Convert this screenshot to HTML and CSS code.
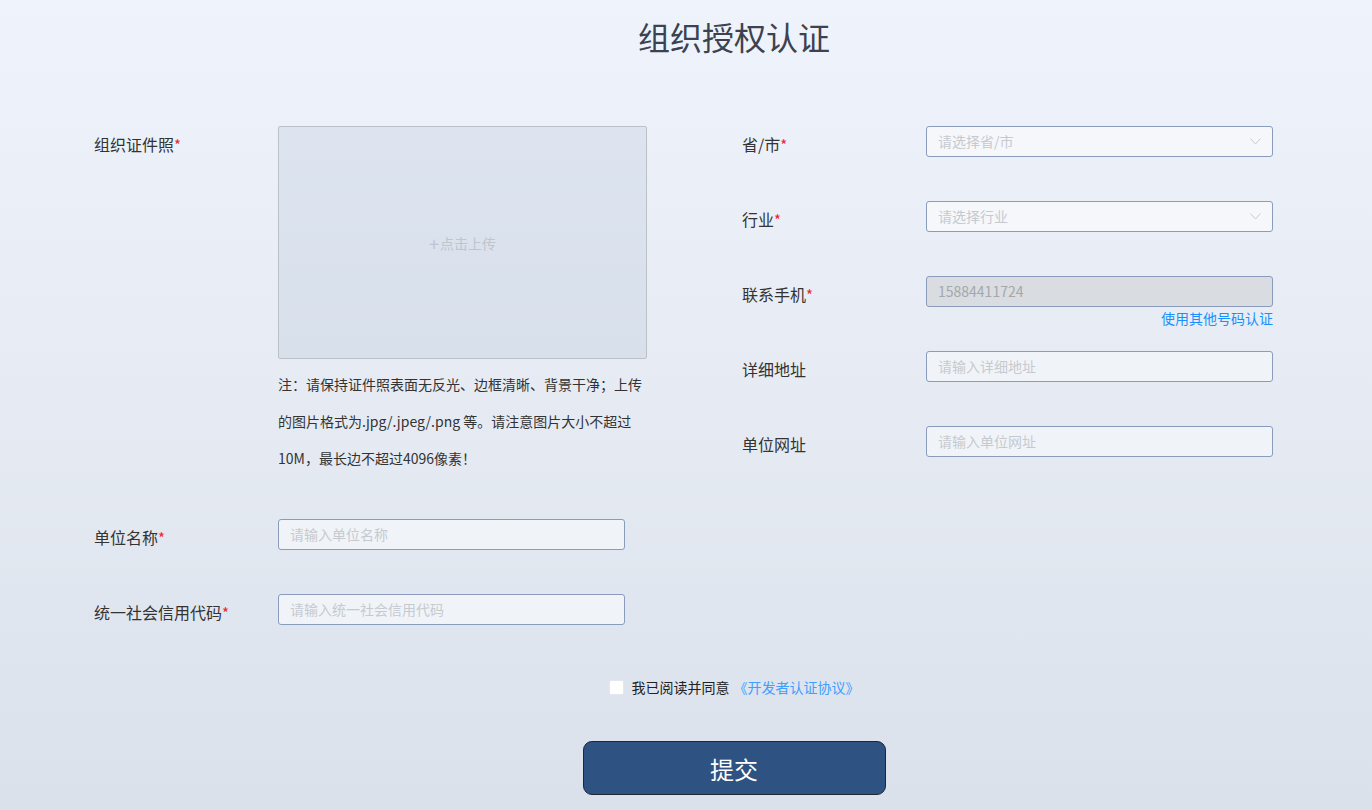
FILE: index.html
```html
<!DOCTYPE html>
<html lang="zh-CN">
<head>
<meta charset="utf-8">
<title>组织授权认证</title>
<link rel="stylesheet" href="styles.css">
</head>
<body>
<div class="page">
  <h1 class="title">组织授权认证</h1>

  <div class="form">
    <div class="col">
      <div class="row row-upload">
        <div class="label">组织证件照<span class="req">*</span></div>
        <div class="field">
          <div class="upload"><span class="plus">+</span>点击上传</div>
          <p class="note">注：请保持证件照表面无反光、边框清晰、背景干净；上传<br>的图片格式为.jpg/.jpeg/.png 等。请注意图片大小不超过<br>10M，最长边不超过4096像素！</p>
        </div>
      </div>
      <div class="row">
        <div class="label">单位名称<span class="req">*</span></div>
        <div class="field"><input class="input" type="text" placeholder="请输入单位名称"></div>
      </div>
      <div class="row">
        <div class="label">统一社会信用代码<span class="req">*</span></div>
        <div class="field"><input class="input" type="text" placeholder="请输入统一社会信用代码"></div>
      </div>
    </div>

    <div class="col">
      <div class="row">
        <div class="label">省/市<span class="req">*</span></div>
        <div class="field">
          <div class="select"><span class="ph">请选择省/市</span>
            <svg class="chev" width="11" height="7" viewBox="0 0 11 7"><polyline points="0.5,0.5 5.5,6 10.5,0.5" fill="none" stroke="#c6cad0" stroke-width="1"/></svg>
          </div>
        </div>
      </div>
      <div class="row">
        <div class="label">行业<span class="req">*</span></div>
        <div class="field">
          <div class="select"><span class="ph">请选择行业</span>
            <svg class="chev" width="11" height="7" viewBox="0 0 11 7"><polyline points="0.5,0.5 5.5,6 10.5,0.5" fill="none" stroke="#c6cad0" stroke-width="1"/></svg>
          </div>
        </div>
      </div>
      <div class="row">
        <div class="label">联系手机<span class="req">*</span></div>
        <div class="field">
          <input class="input disabled" type="text" value="15884411724" disabled>
          <a class="other" href="#">使用其他号码认证</a>
        </div>
      </div>
      <div class="row">
        <div class="label">详细地址</div>
        <div class="field"><input class="input" type="text" placeholder="请输入详细地址"></div>
      </div>
      <div class="row">
        <div class="label">单位网址</div>
        <div class="field"><input class="input" type="text" placeholder="请输入单位网址"></div>
      </div>
    </div>
  </div>

  <div class="center">
    <label class="agree"><span class="box"></span><span class="agree-text">我已阅读并同意</span><a class="protocol" href="#">《开发者认证协议》</a></label>
    <button class="submit" type="button">提交</button>
  </div>
</div>
</body>
</html>
```

FILE: styles.css
```css
* { box-sizing: border-box; }
html, body { margin: 0; padding: 0; }
body {
  width: 1372px;
  height: 810px;
  overflow: hidden;
  background: linear-gradient(180deg, #eff4fc 0%, #e6ebf3 50%, #dae1eb 100%);
  font-family: "Noto Sans CJK SC", "Noto Sans", sans-serif;
  color: #333;
}
.page { width: 1372px; }
.title {
  margin: 0;
  padding: 16px 0 0 96px;
  height: 56px;
  line-height: 40px;
  font-size: 32px;
  font-weight: 400;
  text-align: center;
  color: #3c4250;
}
.form {
  margin-top: 70px;
  padding-left: 94px;
  display: grid;
  grid-template-columns: 648px 531px;
}
.col { display: flex; flex-direction: column; }
.row {
  display: flex;
  height: 75px;
}
.row-upload { height: 393px; }
.label {
  width: 184px;
  flex: none;
  padding-top: 8px;
  font-size: 16px;
  line-height: 20px;
  color: #333;
}
.req { color: #f5222d; font-size: 15px; }
.field { width: 347px; display: flex; flex-direction: column; }
.row-upload .field { width: 370px; }
.upload {
  width: 369px;
  height: 233px;
  border: 1px solid #bcc1c8;
  border-radius: 2px;
  background: linear-gradient(180deg, #dde4ef, #d8e0ec);
  display: flex;
  align-items: center;
  justify-content: center;
  font-size: 14px;
  color: #c0c4cc;
}
.plus { font-size: 18px; margin-right: 1px; line-height: 1; }
.note {
  margin: 7px 0 0;
  font-size: 14px;
  line-height: 37px;
  white-space: nowrap;
  color: #333;
}
.input {
  width: 347px;
  height: 31px;
  border: 1px solid #8a9bbb;
  border-radius: 3px;
  background: #f0f4f8;
  padding: 0 11px 1px;
  font-family: inherit;
  font-size: 14px;
  color: #333;
  outline: none;
}
.input::placeholder { color: #c6cad0; }
.input.disabled {
  background: #d9dce0;
  color: #a4a8ad;
}
.select {
  width: 347px;
  height: 31px;
  border: 1px solid #8a9bbb;
  border-radius: 3px;
  background: #f5f7fb;
  padding: 0 11px 1px;
  display: flex;
  align-items: center;
  justify-content: space-between;
  font-size: 14px;
}
.ph { color: #c6cad0; }
.other {
  align-self: flex-end;
  margin-top: 2px;
  font-size: 14px;
  line-height: 18px;
  color: #1890ff;
  text-decoration: none;
}
.center {
  padding-left: 96px;
  display: flex;
  flex-direction: column;
  align-items: center;
}
.agree {
  margin-top: 8px;
  display: flex;
  align-items: center;
  height: 20px;
  line-height: 20px;
}
.box {
  width: 15px;
  height: 15px;
  background: #fff;
  border: 1px solid #e4e7ed;
  border-radius: 2px;
  margin-right: 8px;
}
.agree-text { color: #222; margin-right: 4px; font-size: 14px; }
.protocol { color: #409eff; text-decoration: none; font-size: 14px; }
.submit {
  margin-top: 44px;
  width: 303px;
  height: 54px;
  border: 1px solid #1f2633;
  border-radius: 9px;
  background: #2e5281;
  color: #fff;
  font-family: inherit;
  font-size: 24px;
  cursor: pointer;
}
```
